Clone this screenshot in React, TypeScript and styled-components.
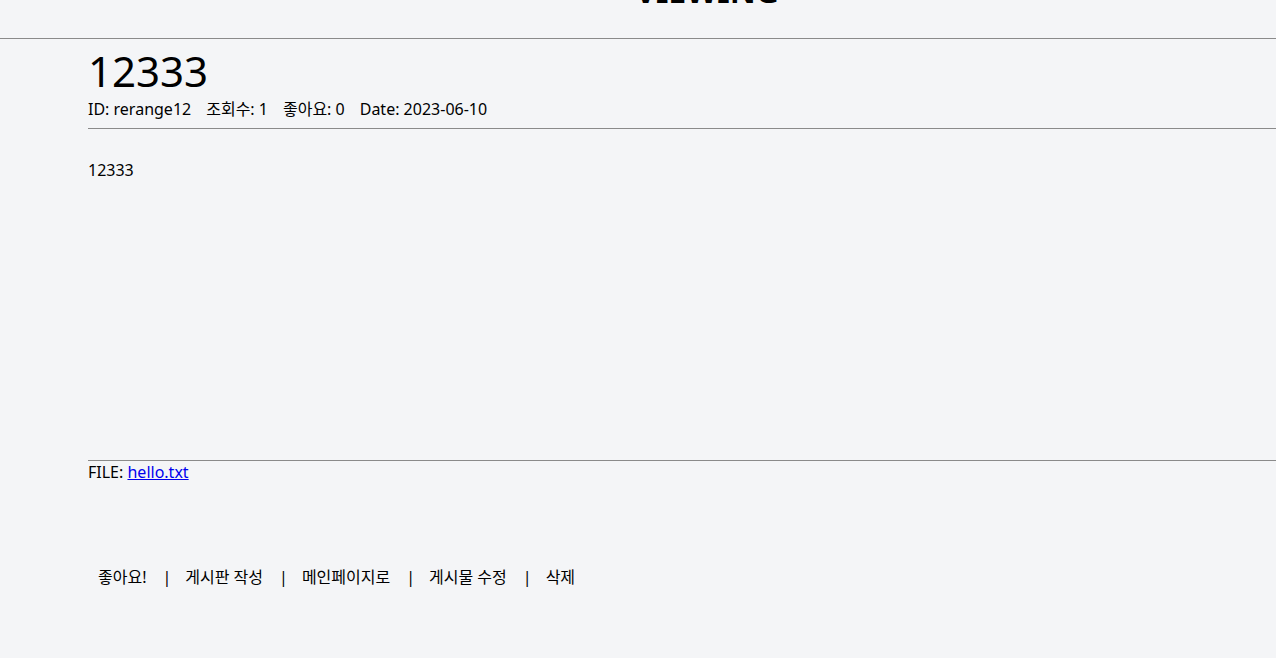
import React from 'react';
import styled, { createGlobalStyle } from 'styled-components';

const GlobalStyle = createGlobalStyle`
  html, body {
    margin: 0;
    padding: 0;
    background: #f4f5f7;
    color: #000;
    font-family: "Noto Sans", "Noto Sans CJK KR", sans-serif;
    overflow: hidden;
  }
`;

const Header = styled.header`
  height: 38px;
  border-bottom: 1px solid #8a8a8a;
  overflow: hidden;
  text-align: center;
  padding-left: 138px;
`;

const PageTitle = styled.h1`
  margin: -25px 0 0;
  font-size: 32px;
  line-height: 32px;
  font-weight: 700;
`;

const Article = styled.main`
  margin-left: 88px;
`;

const PostTitle = styled.h2`
  margin: 7px 0 0;
  font-size: 42px;
  line-height: 50px;
  font-weight: 400;
`;

const Meta = styled.div`
  display: flex;
  gap: 15px;
  margin-top: 2px;
  padding-bottom: 8px;
  font-size: 16px;
  line-height: 22px;
`;

const Body = styled.section`
  box-sizing: border-box;
  height: 333px;
  padding-top: 30px;
  border-top: 1px solid #8a8a8a;
  border-bottom: 1px solid #8a8a8a;
  font-size: 16px;
  line-height: 22px;
`;

const FileLine = styled.div`
  font-size: 16px;
  line-height: 22px;

  a {
    color: #0000ee;
  }
`;

const Nav = styled.nav`
  display: flex;
  align-items: center;
  margin-top: 83px;
  padding-left: 10px;
  font-size: 16px;
  line-height: 22px;
`;

const NavLink = styled.a`
  color: #000;
  text-decoration: none;
  cursor: pointer;
`;

const Divider = styled.span`
  margin: 0 14px 0 16px;
`;

const links = ['좋아요!', '게시판 작성', '메인페이지로', '게시물 수정', '삭제'];

export default function App() {
  return (
    <>
      <GlobalStyle />
      <Header>
        <PageTitle>VIEWING</PageTitle>
      </Header>
      <Article>
        <PostTitle>12333</PostTitle>
        <Meta>
          <span>ID: rerange12</span>
          <span>조회수: 1</span>
          <span>좋아요: 0</span>
          <span>Date: 2023-06-10</span>
        </Meta>
        <Body>12333</Body>
        <FileLine>
          FILE: <a href="#">hello.txt</a>
        </FileLine>
        <Nav>
          {links.map((label, i) => (
            <React.Fragment key={label}>
              {i > 0 && <Divider>|</Divider>}
              <NavLink>{label}</NavLink>
            </React.Fragment>
          ))}
        </Nav>
      </Article>
    </>
  );
}
